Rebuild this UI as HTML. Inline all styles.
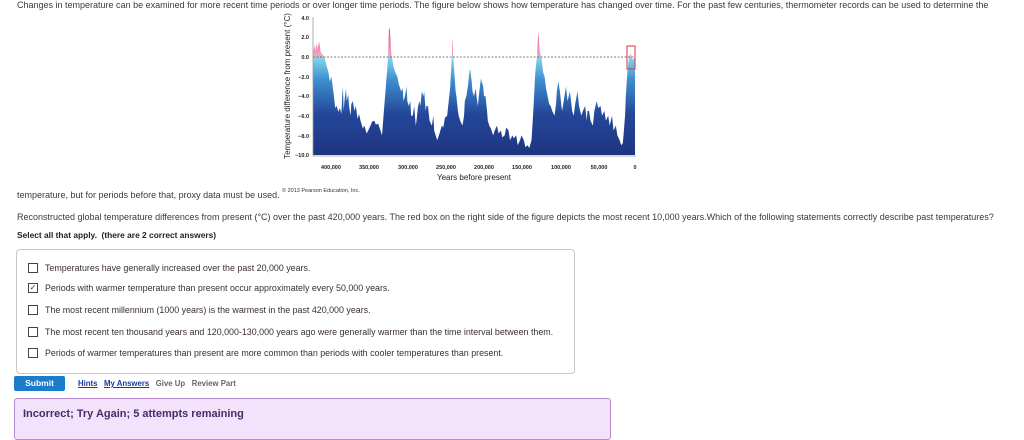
<!DOCTYPE html>
<html><head><meta charset="utf-8"><style>
body{margin:0;width:1024px;height:426px;overflow:hidden;background:#fff;font-family:"Liberation Sans",Arial,sans-serif;color:#333;position:relative}
.a{position:absolute;white-space:nowrap}
.t{font-size:9px;color:#3a3a3a}
.opt{font-size:8.9px;color:#3b2f2f;left:45px}
.cb{position:absolute;left:28px;width:8px;height:8px;border:1px solid #444;background:#fff}
</style></head><body>
<div class="a t" style="left:17px;top:0px">Changes in temperature can be examined for more recent time periods or over longer time periods. The figure below shows how temperature has changed over time. For the past few centuries, thermometer records can be used to determine the</div>
<svg class="a" style="left:0;top:0" width="1024" height="200">
<defs><linearGradient id="g" gradientUnits="userSpaceOnUse" x1="0" y1="-4" x2="0" y2="10">
<stop offset="0" stop-color="#e0305a"/><stop offset="0.28" stop-color="#f0a8c8"/><stop offset="0.29" stop-color="#80d8ec"/><stop offset="0.45" stop-color="#3f8fd0"/><stop offset="0.7" stop-color="#24479a"/><stop offset="1" stop-color="#1e3580"/></linearGradient></defs>
<g transform="translate(313,57) scale(0.7667,9.8)">
<polygon fill="url(#g)" points="0,10 0,-0.5 2,-1.2 3,-0.6 5,-1.4 6,-0.8 8,-1.6 10,-0.5 15,0 18,1 20,1.5 22,2.5 24,2 27,3.8 29,5.2 31,5 33,5.6 35,5.2 37,5.8 38,4 39,3 40,5.5 41,4.5 43,3.2 44,4.5 46,3.8 47,5 49,6 50,4.8 52,4.5 54,5.5 56,5 58,6.3 60,5.8 62,6.5 65,7.3 67,7 70,7.8 72,7.5 75,7 77,6.6 80,6.5 82,6.9 85,6.8 88,7.5 90,8 92,6 94,4 95,3 97,1 98,-0.5 99,-2.8 100,-3 101,-2 102,-0.5 104,0.5 105,1 107,1.5 110,2 112,2.8 115,3.5 117,3.2 118,4.5 120,4 122,3 123,4.5 125,5 127,4.5 128,6 130,6 132,5 134,7 135,6.5 137,5 139,4.5 140,5 142,3.5 144,4 145,3.5 147,5.5 148,5 150,5 152,6.5 155,7 157,6 158,7.5 160,8 162,8.5 165,7.8 168,7 170,7.2 172,6.2 175,6 177,4.5 179,3 180,1.5 181,0 182,-2 183,0 184,1.2 186,3.5 187,4 189,5.5 190,6 192,6.5 195,7 197,6 198,4.5 200,4 202,3 204,1.5 205,1.2 207,2.5 208,3.5 210,4 212,3.2 215,5 217,3.5 219,2.2 220,2.5 222,3 223,4 225,4 227,5.5 228,6.5 230,7 232,7.3 235,8 237,7.5 240,7 242,7.8 245,7.5 247,8.2 250,8 252,7.2 255,7.5 257,8.5 260,8 262,8.3 265,8 267,9 270,8.5 272,8 275,8.5 277,9.2 280,9 282,9.3 285,8.5 287,6 289,3 290,1.5 292,0 293,-1.5 294,-2.6 295,-1.2 296,-0.5 298,0 300,1.5 302,2 304,3.2 306,4 308,4.8 310,5 312,5.5 315,6 317,4.8 318,3.5 320,2.5 322,3.5 324,5 325,5.5 327,4.5 330,3 332,4.5 335,3.5 337,4.8 338,5.5 340,6 342,4.8 345,3.5 347,5 350,6 352,5.5 355,5 357,6.5 358,5.5 360,5.5 362,6.5 365,7 367,5.5 370,4.5 372,5.2 375,5 377,6 380,5.5 382,6.5 385,6 387,7 390,6 392,7.5 395,7 397,8 400,8.5 402,9 404,8.8 405,8 407,6 408,4 409,2.8 410,1.5 411,0.8 412,0 414,-0.3 415,-0.2 417,0.3 418,0.2 420,0 420,10"/>
</g>
<line x1="313" y1="57" x2="635" y2="57" stroke="#555" stroke-width="0.8" stroke-dasharray="2,1.5"/>
<rect x="627" y="46" width="8" height="23" fill="none" stroke="#e03040" stroke-width="1"/>
<line x1="313" y1="17" x2="313" y2="156" stroke="#999" stroke-width="0.8"/>
<line x1="313" y1="156" x2="636" y2="156" stroke="#999" stroke-width="0.8"/>
<g font-size="5.5" fill="#222" font-weight="bold" text-anchor="end">
<text x="309" y="20">4.0</text><text x="309" y="39">2.0</text><text x="309" y="59">0.0</text><text x="309" y="79">−2.0</text><text x="309" y="98">−4.0</text><text x="309" y="118">−6.0</text><text x="309" y="138">−8.0</text><text x="309" y="157">−10.0</text></g>
<g font-size="5.5" fill="#222" font-weight="bold" text-anchor="middle">
<text x="331" y="169">400,000</text><text x="369" y="169">350,000</text><text x="408" y="169">300,000</text><text x="446" y="169">250,000</text><text x="484" y="169">200,000</text><text x="522" y="169">150,000</text><text x="561" y="169">100,000</text><text x="599" y="169">50,000</text><text x="635" y="169">0</text></g>
<text x="474" y="180" font-size="8" fill="#222" text-anchor="middle">Years before present</text>
<text transform="translate(290,86) rotate(-90)" font-size="8" fill="#222" text-anchor="middle">Temperature difference from present (°C)</text>
<text x="282" y="192" font-size="5.5" fill="#333">© 2013 Pearson Education, Inc.</text>
</svg>
<div class="a t" style="left:17px;top:190px">temperature, but for periods before that, proxy data must be used.</div>
<div class="a t" style="left:17px;top:212px">Reconstructed global temperature differences from present (°C) over the past 420,000 years. The red box on the right side of the figure depicts the most recent 10,000 years.Which of the following statements correctly describe past temperatures?</div>
<div class="a" style="left:17px;top:230px;font-size:8.4px;font-weight:bold;color:#222">Select all that apply. &nbsp;(there are 2 correct answers)</div>
<div class="a" style="left:16px;top:249px;width:557px;height:123px;border:1px solid #c8c8c8;border-radius:4px"></div>
<div class="cb" style="top:263px"></div><div class="a opt" style="top:263px">Temperatures have generally increased over the past 20,000 years.</div>
<div class="cb" style="top:283px;font-size:8px;line-height:8px;text-align:center">✓</div><div class="a opt" style="top:283px">Periods with warmer temperature than present occur approximately every 50,000 years.</div>
<div class="cb" style="top:305px"></div><div class="a opt" style="top:305px">The most recent millennium (1000 years) is the warmest in the past 420,000 years.</div>
<div class="cb" style="top:327px"></div><div class="a opt" style="top:327px">The most recent ten thousand years and 120,000-130,000 years ago were generally warmer than the time interval between them.</div>
<div class="cb" style="top:348px"></div><div class="a opt" style="top:348px">Periods of warmer temperatures than present are more common than periods with cooler temperatures than present.</div>
<div class="a" style="left:14px;top:376px;width:51px;height:15px;background:#1a7ccb;border-radius:2px;color:#fff;font-size:8.5px;font-weight:bold;text-align:center;line-height:15px">Submit</div>
<div class="a" style="left:78px;top:379px;font-size:7.8px;font-weight:bold"><span style="color:#1a3a9a;text-decoration:underline">Hints</span>&nbsp;&nbsp; <span style="color:#1a3a9a;text-decoration:underline">My Answers</span>&nbsp;&nbsp; <span style="color:#666">Give Up</span>&nbsp;&nbsp; <span style="color:#666">Review Part</span></div>
<div class="a" style="left:14px;top:398px;width:595px;height:40px;background:#f3e2fb;border:1px solid #b88ad0;border-radius:3px"></div>
<div class="a" style="left:23px;top:408px;font-size:11px;font-weight:bold;color:#4a2b6a">Incorrect; Try Again; 5 attempts remaining</div>
</body></html>
